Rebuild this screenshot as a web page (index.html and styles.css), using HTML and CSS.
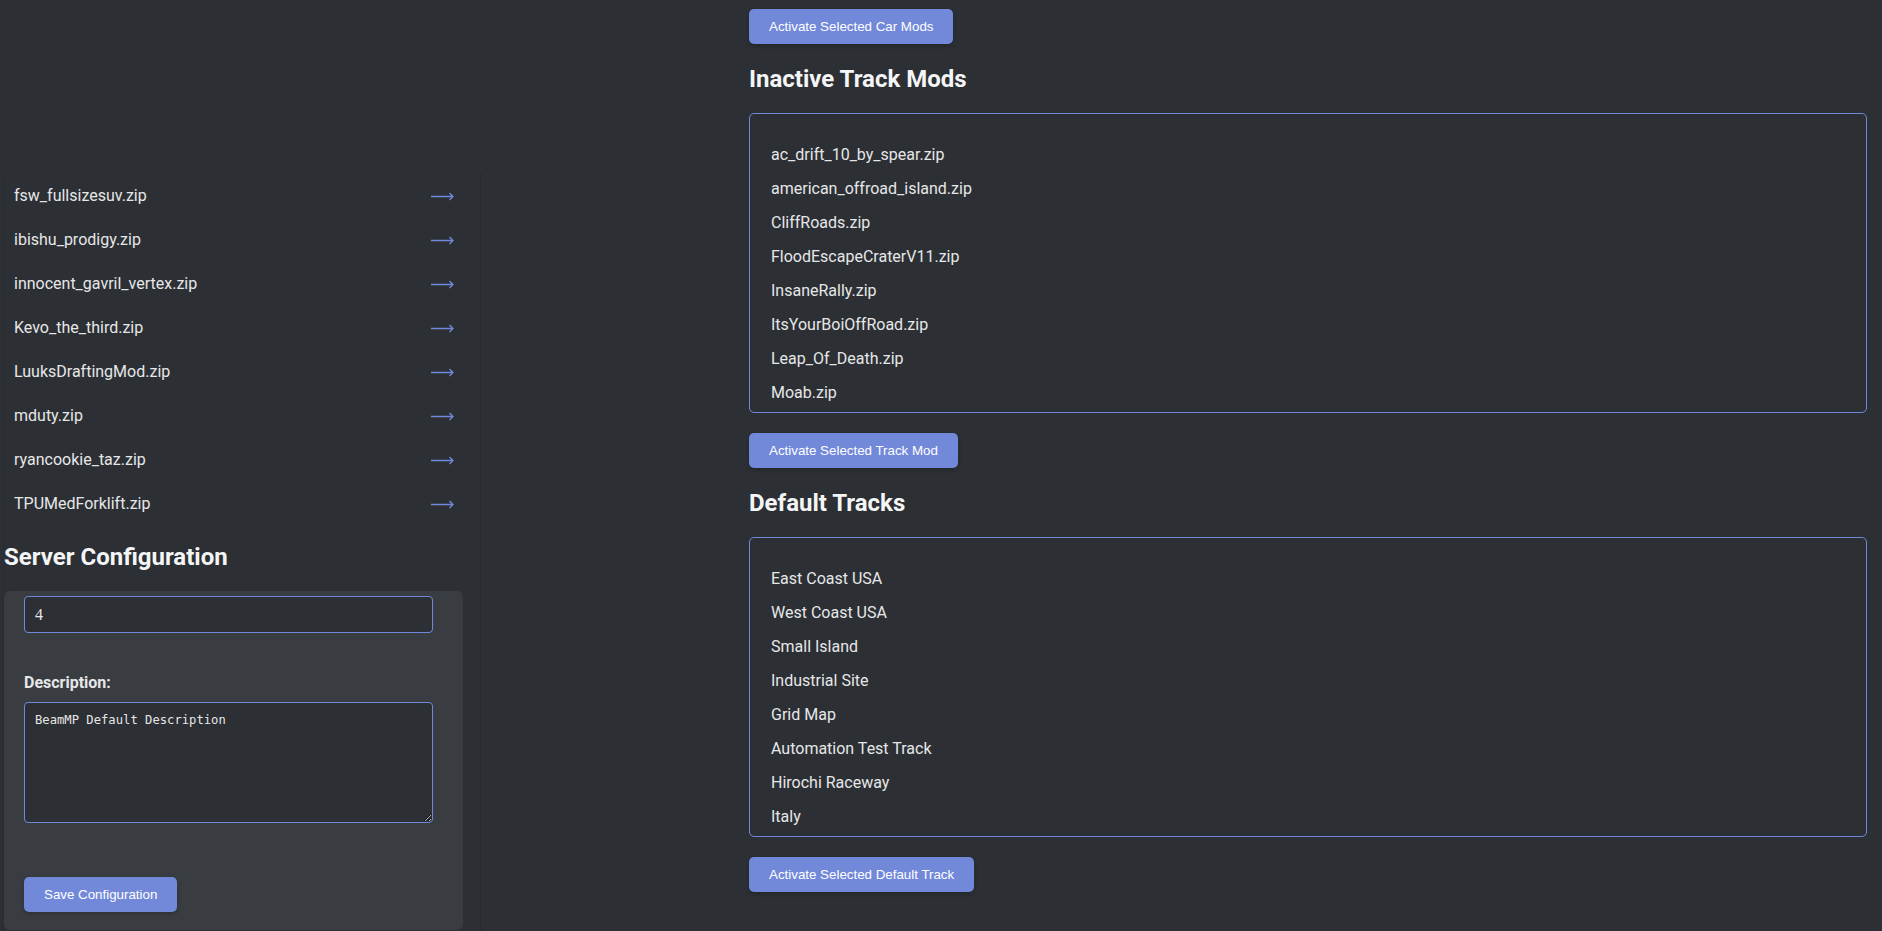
FILE: index.html
```html
<!DOCTYPE html>
<html lang="en">
<head>
<meta charset="utf-8">
<title>BeamMP Server Manager</title>
<link rel="stylesheet" href="styles.css">
</head>
<body>
<div class="layout">
  <aside class="sidebar">
    <div class="sidebar-panel">
      <ul class="car-list">
        <li class="car-item"><span>fsw_fullsizesuv.zip</span><svg class="arrow" viewBox="0 0 23 9" width="23" height="9"><path d="M0 4.5H22M18.5 1L22 4.5L18.5 8"/></svg></li>
        <li class="car-item"><span>ibishu_prodigy.zip</span><svg class="arrow" viewBox="0 0 23 9" width="23" height="9"><path d="M0 4.5H22M18.5 1L22 4.5L18.5 8"/></svg></li>
        <li class="car-item"><span>innocent_gavril_vertex.zip</span><svg class="arrow" viewBox="0 0 23 9" width="23" height="9"><path d="M0 4.5H22M18.5 1L22 4.5L18.5 8"/></svg></li>
        <li class="car-item"><span>Kevo_the_third.zip</span><svg class="arrow" viewBox="0 0 23 9" width="23" height="9"><path d="M0 4.5H22M18.5 1L22 4.5L18.5 8"/></svg></li>
        <li class="car-item"><span>LuuksDraftingMod.zip</span><svg class="arrow" viewBox="0 0 23 9" width="23" height="9"><path d="M0 4.5H22M18.5 1L22 4.5L18.5 8"/></svg></li>
        <li class="car-item"><span>mduty.zip</span><svg class="arrow" viewBox="0 0 23 9" width="23" height="9"><path d="M0 4.5H22M18.5 1L22 4.5L18.5 8"/></svg></li>
        <li class="car-item"><span>ryancookie_taz.zip</span><svg class="arrow" viewBox="0 0 23 9" width="23" height="9"><path d="M0 4.5H22M18.5 1L22 4.5L18.5 8"/></svg></li>
        <li class="car-item"><span>TPUMedForklift.zip</span><svg class="arrow" viewBox="0 0 23 9" width="23" height="9"><path d="M0 4.5H22M18.5 1L22 4.5L18.5 8"/></svg></li>
      </ul>
      <h2 class="section-title side-title">Server Configuration</h2>
      <div class="config-card">
        <input class="field line" type="text" value="4">
        <label class="field-label">Description:</label>
        <textarea class="field area">BeamMP Default Description</textarea>
        <button class="btn save-btn">Save Configuration</button>
      </div>
    </div>
  </aside>

  <main class="content">
    <button class="btn">Activate Selected Car Mods</button>

    <h2 class="section-title">Inactive Track Mods</h2>
    <div class="mod-box">
      <div class="mod-item">ac_drift_10_by_spear.zip</div>
      <div class="mod-item">american_offroad_island.zip</div>
      <div class="mod-item">CliffRoads.zip</div>
      <div class="mod-item">FloodEscapeCraterV11.zip</div>
      <div class="mod-item">InsaneRally.zip</div>
      <div class="mod-item">ItsYourBoiOffRoad.zip</div>
      <div class="mod-item">Leap_Of_Death.zip</div>
      <div class="mod-item">Moab.zip</div>
    </div>
    <button class="btn after-box">Activate Selected Track Mod</button>

    <h2 class="section-title">Default Tracks</h2>
    <div class="mod-box">
      <div class="mod-item">East Coast USA</div>
      <div class="mod-item">West Coast USA</div>
      <div class="mod-item">Small Island</div>
      <div class="mod-item">Industrial Site</div>
      <div class="mod-item">Grid Map</div>
      <div class="mod-item">Automation Test Track</div>
      <div class="mod-item">Hirochi Raceway</div>
      <div class="mod-item">Italy</div>
    </div>
    <button class="btn after-box">Activate Selected Default Track</button>
  </main>
</div>
</body>
</html>
```

FILE: styles.css
```css
html, body {
  margin: 0;
  padding: 0;
  height: 100%;
  overflow: hidden;
}

body {
  background: #2c2f33;
  color: #dcddde;
  font-family: Roboto, "Liberation Sans", Arial, sans-serif;
  font-size: 16px;
}

.layout {
  display: flex;
  height: 931px;
}

/* ---------- sidebar ---------- */
.sidebar {
  width: 481px;
  flex: 0 0 481px;
  display: flex;
  flex-direction: column;
}

.sidebar-panel {
  margin-top: 173px;
  margin-left: 3px;
  flex: 1;
  border-left: 1px solid rgba(0, 0, 0, 0.06);
  border-right: 1px solid rgba(0, 0, 0, 0.1);
  display: flex;
  flex-direction: column;
  min-height: 0;
}

.car-list {
  list-style: none;
  margin: 0;
  padding: 0;
}

.car-item {
  height: 44px;
  display: flex;
  align-items: center;
  justify-content: space-between;
  padding: 0 26px 0 10px;
  color: #e6e7e9;
  font-size: 16px;
}

.arrow {
  display: block;
  margin-top: 3px;
  fill: none;
  stroke: #7289da;
  stroke-width: 1.3;
}

.section-title {
  margin: 20px 0 19px;
  font-family: Roboto, "Liberation Sans", Arial, sans-serif;
  font-weight: 700;
  font-size: 24px;
  line-height: 30px;
  color: #f4f5f6;
}

.side-title {
  margin: 17px 0 19px;
}

.config-card {
  width: 459px;
  height: 339px;
  box-sizing: border-box;
  background: #393d42;
  border-radius: 6px;
  padding: 5px 30px 0 20px;
  overflow: hidden;
}

.field {
  display: block;
  width: 409px;
  box-sizing: border-box;
  background: #2c2f33;
  color: #e6e6e6;
  border: 1px solid #7289da;
  border-radius: 4px;
  padding: 10px;
  font-family: "Liberation Serif", "Times New Roman", serif;
  font-size: 16px;
  line-height: 15px;
  margin: 0;
  outline: none;
}

.line {
  height: 37px;
  padding: 0 10px;
}

.field-label {
  display: block;
  margin-top: 40px;
  font-weight: 700;
  font-size: 16px;
  line-height: 19px;
  color: #e6e7e9;
}

.area {
  margin-top: 10px;
  height: 121px;
  font-family: "DejaVu Sans Mono", "Liberation Mono", monospace;
  font-size: 12.2px;
  line-height: 15px;
  resize: vertical;
}

.btn {
  display: block;
  background: #7289da;
  color: #ffffff;
  border: none;
  border-radius: 5px;
  padding: 10px 20px;
  font-family: "Liberation Sans", Arial, sans-serif;
  font-size: 13.33px;
  line-height: 15px;
  box-shadow: 0 2px 4px rgba(0, 0, 0, 0.2);
  cursor: pointer;
}

.save-btn {
  margin-top: 54px;
}

/* ---------- main content ---------- */
.content {
  flex: 1;
  margin-left: 268px;
  margin-right: 15px;
  padding-top: 9px;
  display: flex;
  flex-direction: column;
  align-items: flex-start;
  min-width: 0;
}

.mod-box {
  align-self: stretch;
  height: 300px;
  box-sizing: border-box;
  border: 1px solid #7289da;
  border-radius: 5px;
  padding: 24px 21px 0;
  overflow: hidden;
}

.mod-item {
  height: 34px;
  line-height: 34px;
  color: #e6e7e9;
  font-size: 16px;
}

.after-box {
  margin-top: 20px;
}
```
